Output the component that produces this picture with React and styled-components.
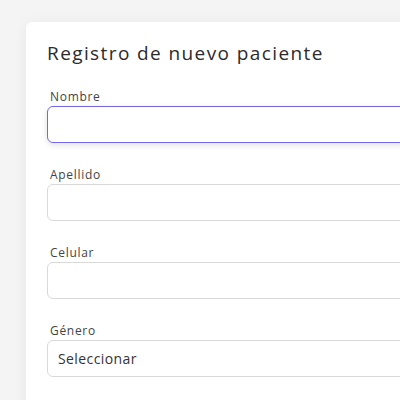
import React from 'react';
import styled, { createGlobalStyle } from 'styled-components';

const GlobalStyle = createGlobalStyle`
  html, body {
    margin: 0;
    padding: 0;
    background: #f4f4f4;
    font-family: "Open Sans", "Liberation Sans", sans-serif;
    overflow: hidden;
  }
`;

const Page = styled.div`
  width: 400px;
  height: 400px;
  padding: 22px 0 0 26px;
  box-sizing: border-box;
  overflow: hidden;
`;

const Card = styled.div`
  width: 420px;
  min-height: 420px;
  background: #fff;
  border-radius: 6px;
  box-shadow: 0 2px 14px rgba(0, 0, 0, 0.06);
  padding: 18px 0 0 21px;
  box-sizing: border-box;
`;

const Title = styled.h1`
  margin: 0 0 23px;
  font-size: 19px;
  font-weight: 500;
  color: #2b2b2b;
  letter-spacing: 1.4px;
  line-height: 26px;
`;

const Form = styled.form`
  display: flex;
  flex-direction: column;
  gap: 24px;
`;

const Field = styled.div`
  display: flex;
  flex-direction: column;
`;

const Label = styled.label`
  font-size: 12px;
  color: #444;
  letter-spacing: 0.7px;
  padding-left: 3px;
  line-height: 15px;
  margin-bottom: 2px;
`;

const Input = styled.input`
  width: 400px;
  height: 37px;
  box-sizing: border-box;
  border: 1px solid ${p => (p.$focus ? '#7367f0' : '#d9d9d9')};
  border-radius: 6px;
  box-shadow: ${p => (p.$focus ? '0 2px 6px rgba(0,0,0,0.12)' : 'none')};
  outline: none;
  padding: 0 10px;
  font-family: inherit;
  font-size: 14px;
  background: #fff;
`;

const Select = styled.div`
  width: 400px;
  height: 37px;
  box-sizing: border-box;
  border: 1px solid #d9d9d9;
  border-radius: 6px;
  padding: 0 10px;
  display: flex;
  align-items: center;
  font-size: 14px;
  color: #333;
  letter-spacing: 0.4px;
`;

const App = () => (
  <Page>
    <GlobalStyle />
    <Card>
      <Title>Registro de nuevo paciente</Title>
      <Form>
        <Field>
          <Label>Nombre</Label>
          <Input $focus />
        </Field>
        <Field>
          <Label>Apellido</Label>
          <Input />
        </Field>
        <Field>
          <Label>Celular</Label>
          <Input />
        </Field>
        <Field>
          <Label>Género</Label>
          <Select>Seleccionar</Select>
        </Field>
      </Form>
    </Card>
  </Page>
);

export default App;
